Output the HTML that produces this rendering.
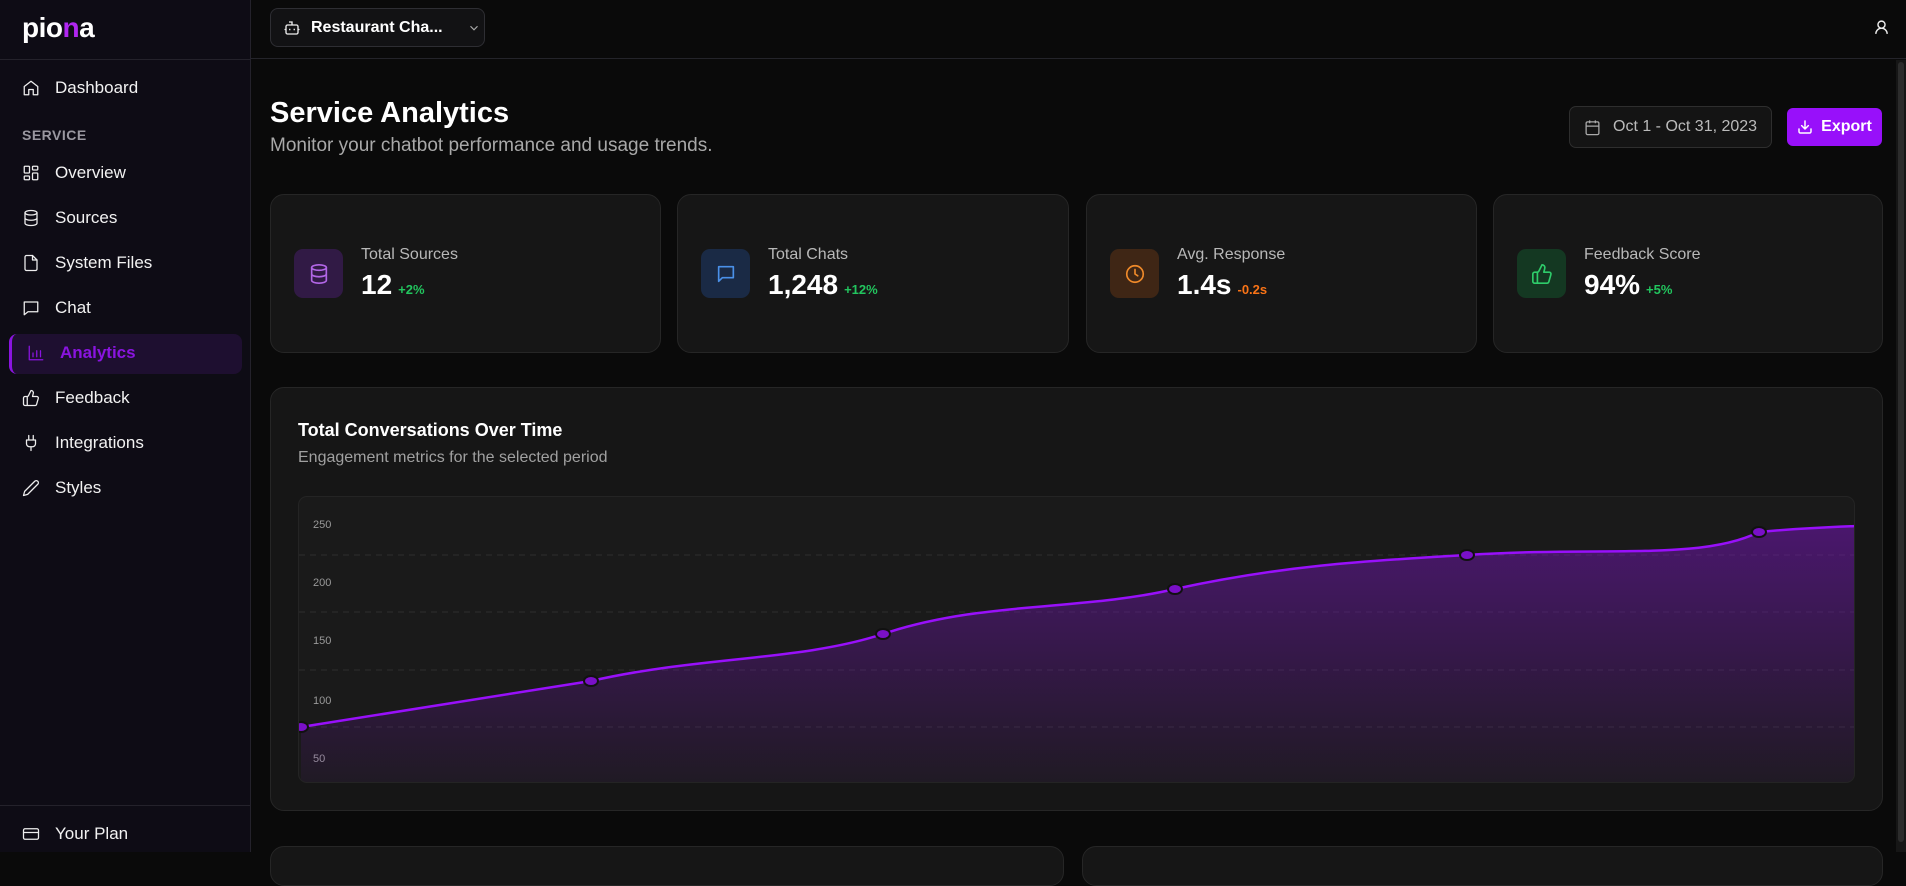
<!DOCTYPE html>
<html><head><meta charset="utf-8"><style>
*{box-sizing:border-box;margin:0;padding:0}
body{width:1906px;height:852px;overflow:hidden;background:#0a0a0a;font-family:"Liberation Sans",sans-serif;color:#fff;position:relative}
.side{position:absolute;left:0;top:0;width:251px;height:852px;background:#0e0c15;border-right:1px solid #24222b}
.logo{position:absolute;left:22px;top:12px;font-size:28px;font-weight:bold;letter-spacing:-0.5px}
.sh{position:absolute;left:0;top:59px;width:251px;border-top:1px solid #24222b}
.nav{position:absolute;left:22px;font-size:17px;display:flex;align-items:center;gap:15px;color:#f2f2f2}
.nav svg{width:18px;height:18px;fill:none;stroke:#eee;stroke-width:1.7;stroke-linecap:round;stroke-linejoin:round}
.sec{position:absolute;left:22px;top:127px;font-size:14px;font-weight:bold;color:#9a98a0;letter-spacing:.5px}
.active{position:absolute;left:9px;top:334px;width:233px;height:40px;background:#1e0f30;border-radius:8px;border-left:3px solid #8a14e0}
.top{position:absolute;left:251px;top:0;right:0;height:59px;border-bottom:1px solid #24242a;background:#0a0a0a}
.dd{position:absolute;left:270px;top:8px;width:215px;height:39px;border:1px solid #2e2e33;border-radius:8px;background:#121214;font-size:16px;font-weight:bold;display:flex;align-items:center;padding-left:12px;gap:10px}
.card{position:absolute;background:#161616;border:1px solid #262626;border-radius:14px}
.ib{position:absolute;left:23px;top:54px;width:49px;height:49px;border-radius:9px;display:flex;align-items:center;justify-content:center}
.ib svg{width:22px;height:22px;fill:none;stroke-width:1.8;stroke-linecap:round;stroke-linejoin:round}
.lab{position:absolute;left:90px;top:51px;font-size:16px;color:#b8b8b8}
.val{position:absolute;left:90px;top:74px;font-size:28px;font-weight:bold}
.val span{font-size:13px;margin-left:6px}
</style></head><body>
<div class="side">
<div class="logo">pio<span style="color:#b026f0">n</span>a</div>
<div class="sh"></div>
<div class="nav" style="top:78px"><svg viewBox="0 0 24 24"><path d="M3 10l9-7 9 7v11h-6v-7H9v7H3z"/></svg>Dashboard</div>
<div class="sec">SERVICE</div>
<div class="nav" style="top:163px"><svg viewBox="0 0 24 24"><rect x="3" y="3" width="7" height="9" rx="1"/><rect x="14" y="3" width="7" height="5" rx="1"/><rect x="14" y="12" width="7" height="9" rx="1"/><rect x="3" y="16" width="7" height="5" rx="1"/></svg>Overview</div>
<div class="nav" style="top:208px"><svg viewBox="0 0 24 24"><ellipse cx="12" cy="5" rx="8" ry="3"/><path d="M4 5v14c0 1.7 3.6 3 8 3s8-1.3 8-3V5M4 12c0 1.7 3.6 3 8 3s8-1.3 8-3"/></svg>Sources</div>
<div class="nav" style="top:253px"><svg viewBox="0 0 24 24"><path d="M14 2H6a2 2 0 0 0-2 2v16a2 2 0 0 0 2 2h12a2 2 0 0 0 2-2V8z"/><path d="M14 2v6h6"/></svg>System Files</div>
<div class="nav" style="top:298px"><svg viewBox="0 0 24 24"><path d="M3 4h18v13H8l-5 4z"/></svg>Chat</div>
<div class="active"></div>
<div class="nav" style="top:343px;left:27px;color:#8a14e0;font-weight:bold"><svg viewBox="0 0 24 24" style="stroke:#8a14e0"><path d="M3 3v18h18M8 17v-5M13 17V9M18 17v-8"/></svg>Analytics</div>
<div class="nav" style="top:388px"><svg viewBox="0 0 24 24"><path d="M7 10v12M15 5.9L14 10h5.8a2 2 0 0 1 1.9 2.6l-2.3 8A2 2 0 0 1 17.5 22H4a2 2 0 0 1-2-2v-8a2 2 0 0 1 2-2h2.8a2 2 0 0 0 1.8-1.1L12 2a3 3 0 0 1 3 3.9z"/></svg>Feedback</div>
<div class="nav" style="top:433px"><svg viewBox="0 0 24 24"><path d="M12 22v-5M9 8V2M15 8V2M18 8v5a4 4 0 0 1-4 4h-4a4 4 0 0 1-4-4V8z"/></svg>Integrations</div>
<div class="nav" style="top:478px"><svg viewBox="0 0 24 24"><path d="M17 3a2.8 2.8 0 1 1 4 4L7.5 20.5 2 22l1.5-5.5z"/></svg>Styles</div>
<div style="position:absolute;left:0;top:805px;width:251px;border-top:1px solid #24222b"></div>
<div class="nav" style="top:824px"><svg viewBox="0 0 24 24"><rect x="2" y="5" width="20" height="14" rx="2"/><path d="M2 10h20"/></svg>Your Plan</div>
</div>
<div class="top"></div>
<div class="dd"><svg width="18" height="18" viewBox="0 0 24 24" fill="none" stroke="#eee" stroke-width="1.8"><path d="M12 8V4H8"/><rect x="4" y="8" width="16" height="12" rx="2"/><path d="M2 14h2M20 14h2M15 13v2M9 13v2"/></svg>Restaurant Cha...<svg style="margin-left:14px" width="14" height="14" viewBox="0 0 24 24" fill="none" stroke="#aaa" stroke-width="2"><path d="M6 9l6 6 6-6"/></svg></div>
<svg style="position:absolute;left:1873px;top:19px" width="17" height="17" viewBox="0 0 24 24" fill="none" stroke="#eee" stroke-width="2"><circle cx="12" cy="8" r="5"/><path d="M20 21a8 8 0 0 0-16 0"/></svg>
<div style="position:absolute;left:1896px;top:60px;width:10px;height:792px;background:#161616"></div>
<div style="position:absolute;left:1898px;top:62px;width:6px;height:780px;background:#2c2c2c;border-radius:3px"></div>

<div style="position:absolute;left:270px;top:97px;font-size:29px;font-weight:bold">Service Analytics</div>
<div style="position:absolute;left:270px;top:135px;font-size:19px;color:#a8a8a8">Monitor your chatbot performance and usage trends.</div>
<div style="position:absolute;left:1569px;top:106px;width:203px;height:42px;border:1px solid #2e2e2e;border-radius:7px;background:#141414;display:flex;align-items:center;padding-left:14px;gap:12px;font-size:16px;color:#bbb"><svg width="17" height="17" viewBox="0 0 24 24" fill="none" stroke="#aaa" stroke-width="1.8"><rect x="3" y="4" width="18" height="18" rx="2"/><path d="M16 2v4M8 2v4M3 10h18"/></svg>Oct 1 - Oct 31, 2023</div>
<div style="position:absolute;left:1787px;top:108px;width:95px;height:38px;background:#9810fa;border-radius:6px;display:flex;align-items:center;justify-content:center;gap:8px;font-size:16px;font-weight:bold"><svg width="16" height="16" viewBox="0 0 24 24" fill="none" stroke="#fff" stroke-width="2.2" stroke-linecap="round"><path d="M21 15v4a2 2 0 0 1-2 2H5a2 2 0 0 1-2-2v-4M7 10l5 5 5-5M12 15V3"/></svg>Export</div>

<div class="card" style="left:270px;top:194px;width:391px;height:159px"><div class="ib" style="background:#311a45"><svg viewBox="0 0 24 24" stroke="#b266e6"><ellipse cx="12" cy="5" rx="8" ry="3"/><path d="M4 5v14c0 1.7 3.6 3 8 3s8-1.3 8-3V5M4 12c0 1.7 3.6 3 8 3s8-1.3 8-3"/></svg></div><div class="lab">Total Sources</div><div class="val">12<span style="color:#22c55e">+2%</span></div></div>
<div class="card" style="left:677px;top:194px;width:392px;height:159px"><div class="ib" style="background:#1a2a45"><svg viewBox="0 0 24 24" stroke="#4a90e8"><path d="M4 4h16v12H8l-4 4z"/></svg></div><div class="lab">Total Chats</div><div class="val">1,248<span style="color:#22c55e">+12%</span></div></div>
<div class="card" style="left:1086px;top:194px;width:391px;height:159px"><div class="ib" style="background:#3f2615"><svg viewBox="0 0 24 24" stroke="#f08a2a"><circle cx="12" cy="12" r="9"/><path d="M12 7v5l3 2"/></svg></div><div class="lab">Avg. Response</div><div class="val">1.4s<span style="color:#f97316">-0.2s</span></div></div>
<div class="card" style="left:1493px;top:194px;width:390px;height:159px"><div class="ib" style="background:#143822"><svg viewBox="0 0 24 24" stroke="#2ecc6a"><path d="M7 10v12M15 5.9L14 10h5.8a2 2 0 0 1 1.9 2.6l-2.3 8A2 2 0 0 1 17.5 22H4a2 2 0 0 1-2-2v-8a2 2 0 0 1 2-2h2.8a2 2 0 0 0 1.8-1.1L12 2a3 3 0 0 1 3 3.9z"/></svg></div><div class="lab">Feedback Score</div><div class="val">94%<span style="color:#22c55e">+5%</span></div></div>

<div class="card" style="left:270px;top:387px;width:1613px;height:424px">
<div style="position:absolute;left:27px;top:32px;font-size:18px;font-weight:bold">Total Conversations Over Time</div>
<div style="position:absolute;left:27px;top:61px;font-size:16px;color:#a0a0a0">Engagement metrics for the selected period</div>
</div>
<div style="position:absolute;left:298px;top:496px;width:1557px;height:287px;background:#1a1a1a;border:1px solid #242424;border-radius:9px;overflow:hidden">
<svg width="1557" height="287" viewBox="298 496 1557 287" style="position:absolute;left:0;top:0">
<defs><linearGradient id="g" x1="0" y1="0" x2="0" y2="1"><stop offset="0" stop-color="#7a14c0" stop-opacity=".5"/><stop offset="1" stop-color="#7a14c0" stop-opacity=".06"/></linearGradient></defs>
<g stroke="#2e2e2e" stroke-dasharray="6 5"><path d="M298 554H1855M298 611H1855M298 669H1855M298 726H1855"/></g>
<g fill="#999" font-size="11" font-family="Liberation Sans"><text x="312" y="527">250</text><text x="312" y="585">200</text><text x="312" y="643">150</text><text x="312" y="703">100</text><text x="312" y="761">50</text></g>
<path d="M300 726C400 710 500 695 590 680C700 655 800 660 882 633C980 600 1080 610 1174 588C1280 565 1360 560 1466 554C1600 545 1700 560 1758 531C1800 527 1830 526 1855 525V783H300Z" fill="url(#g)"/>
<path d="M300 726C400 710 500 695 590 680C700 655 800 660 882 633C980 600 1080 610 1174 588C1280 565 1360 560 1466 554C1600 545 1700 560 1758 531C1800 527 1830 526 1855 525" fill="none" stroke="#9810fa" stroke-width="2.5"/>
<g fill="#7a10c8" stroke="#111" stroke-width="2"><ellipse cx="300" cy="726" rx="7" ry="5"/><ellipse cx="590" cy="680" rx="7" ry="5"/><ellipse cx="882" cy="633" rx="7" ry="5"/><ellipse cx="1174" cy="588" rx="7" ry="5"/><ellipse cx="1466" cy="554" rx="7" ry="5"/><ellipse cx="1758" cy="531" rx="7" ry="5"/></g>
</svg></div>
<div class="card" style="left:270px;top:846px;width:794px;height:40px"></div>
<div class="card" style="left:1082px;top:846px;width:801px;height:40px"></div>
</body></html>
